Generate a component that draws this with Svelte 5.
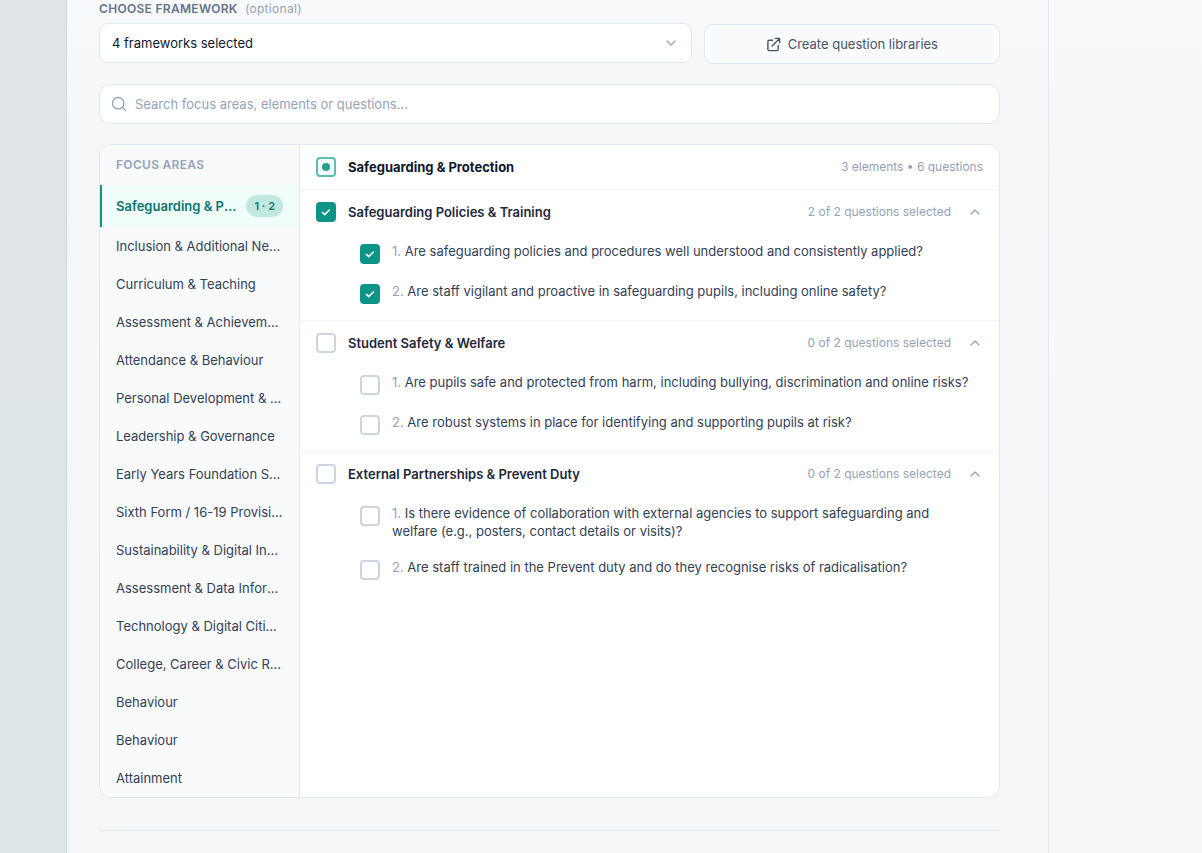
<script>
	let search = $state('');
	let activeArea = $state(0);

	const areas = [
		{ name: 'Safeguarding & Protection', badge: '1 · 2' },
		{ name: 'Inclusion & Additional Needs' },
		{ name: 'Curriculum & Teaching' },
		{ name: 'Assessment & Achievement' },
		{ name: 'Attendance & Behaviour' },
		{ name: 'Personal Development & Wellbeing' },
		{ name: 'Leadership & Governance' },
		{ name: 'Early Years Foundation Stage' },
		{ name: 'Sixth Form / 16-19 Provision' },
		{ name: 'Sustainability & Digital Innovation' },
		{ name: 'Assessment & Data Informed' },
		{ name: 'Technology & Digital Citizenship' },
		{ name: 'College, Career & Civic Readiness' },
		{ name: 'Behaviour' },
		{ name: 'Behaviour' },
		{ name: 'Attainment' }
	];

	let elements = $state([
		{
			name: 'Safeguarding Policies & Training',
			open: true,
			questions: [
				{ text: 'Are safeguarding policies and procedures well understood and consistently applied?', checked: true },
				{ text: 'Are staff vigilant and proactive in safeguarding pupils, including online safety?', checked: true }
			]
		},
		{
			name: 'Student Safety & Welfare',
			open: true,
			questions: [
				{ text: 'Are pupils safe and protected from harm, including bullying, discrimination and online risks?', checked: false },
				{ text: 'Are robust systems in place for identifying and supporting pupils at risk?', checked: false }
			]
		},
		{
			name: 'External Partnerships & Prevent Duty',
			open: true,
			questions: [
				{ text: 'Is there evidence of collaboration with external agencies to support safeguarding and welfare (e.g., posters, contact details or visits)?', checked: false },
				{ text: 'Are staff trained in the Prevent duty and do they recognise risks of radicalisation?', checked: false }
			]
		}
	]);

	const countSelected = (list) => list.filter((q) => q.checked).length;
	const allSelected = (list) => list.every((q) => q.checked);

	const allQuestions = $derived(elements.flatMap((el) => el.questions));
	const areaChecked = $derived(allSelected(allQuestions));
	const areaPartial = $derived(!areaChecked && countSelected(allQuestions) > 0);

	const setAll = (list, value) => {
		list.forEach((q) => (q.checked = value));
	};
</script>

{#snippet tick()}
	<svg class="tick" viewBox="0 0 20 20" aria-hidden="true">
		<path d="M6.4 10.4l2.3 2.2 4.7-4.6" />
	</svg>
{/snippet}

<div class="page">
	<div class="rail"></div>

	<main class="content">
		<div class="toolbar">
			<div class="field">
				<label for="framework">Choose framework <span class="optional">(optional)</span></label>
				<div class="select-box">
					<select id="framework">
						<option>4 frameworks selected</option>
					</select>
					<svg class="chevron" viewBox="0 0 16 16" aria-hidden="true"><path d="M4 6l4 4 4-4" /></svg>
				</div>
			</div>
			<button type="button" class="create">
				<svg viewBox="0 0 16 16" aria-hidden="true">
					<path d="M7 3.5H3.5a1.5 1.5 0 0 0-1.5 1.5v8a1.5 1.5 0 0 0 1.5 1.5h8a1.5 1.5 0 0 0 1.5-1.5V9" />
					<path d="M10 1.5h4.5V6M14.5 1.5L6.5 9.5" />
				</svg>
				Create question libraries
			</button>
		</div>

		<div class="search">
			<svg viewBox="0 0 16 16" aria-hidden="true">
				<circle cx="7.2" cy="7.2" r="5.7" />
				<path d="M11.4 11.4l3.1 3.1" />
			</svg>
			<input
				type="text"
				aria-label="Search focus areas"
				placeholder="Search focus areas, elements or questions..."
				bind:value={search}
			/>
		</div>

		<div class="picker">
			<nav class="areas">
				<h2>Focus areas</h2>
				{#each areas as area, i}
					<button type="button" class="area" class:active={i === activeArea} onclick={() => (activeArea = i)}>
						<span class="area-name">{area.name}</span>
						{#if area.badge}
							<span class="badge">{area.badge}</span>
						{/if}
					</button>
				{/each}
			</nav>

			<div class="panel">
				<div class="row panel-head">
					<label>
						<span class="check">
							<input
								type="checkbox"
								checked={areaChecked}
								indeterminate={areaPartial}
								onchange={() => setAll(allQuestions, !areaChecked)}
							/>
							{@render tick()}
						</span>
						<span class="area-title">{areas[0].name}</span>
					</label>
					<span class="meta">{elements.length} elements • {allQuestions.length} questions</span>
				</div>

				{#each elements as el}
					<section>
						<div class="row">
							<label>
								<span class="check">
									<input
										type="checkbox"
										checked={allSelected(el.questions)}
										onchange={(e) => setAll(el.questions, e.currentTarget.checked)}
									/>
									{@render tick()}
								</span>
								<span class="element-title">{el.name}</span>
							</label>
							<span class="meta">{countSelected(el.questions)} of {el.questions.length} questions selected</span>
							<button type="button" class="toggle" aria-label="Toggle questions" onclick={() => (el.open = !el.open)}>
								<svg class="chevron" class:closed={!el.open} viewBox="0 0 16 16" aria-hidden="true">
									<path d="M4 10l4-4 4 4" />
								</svg>
							</button>
						</div>
						{#if el.open}
							<ul>
								{#each el.questions as question, n}
									<li>
										<label>
											<span class="check">
												<input type="checkbox" bind:checked={question.checked} />
												{@render tick()}
											</span>
											<span><span class="number">{n + 1}.</span> {question.text}</span>
										</label>
									</li>
								{/each}
							</ul>
						{/if}
					</section>
				{/each}
			</div>
		</div>

		<hr />
	</main>

	<div class="gutter"></div>
</div>

<style>
	:global(body) {
		background: #f5f7f7;
	}

	.page {
		display: flex;
		min-height: 100vh;
		font-family: Inter, 'Liberation Sans', sans-serif;
		font-size: 13px;
		line-height: 18px;
		color: #334155;
		background: linear-gradient(#f7f9fb, #f5f7f7 150px, #f6f8f9 350px, #f5f7f7 600px);
	}

	.page * {
		box-sizing: border-box;
	}

	.rail {
		flex: 0 0 67px;
		background: linear-gradient(#dfe5e9, #dde5e7);
		border-right: 1px solid #cdd6dd;
	}

	.gutter {
		flex: 0 0 154px;
		border-left: 1px solid #e2e8f0;
	}

	.content {
		flex: 1;
		min-width: 0;
		padding: 0 48px 22px 32px;
	}

	button,
	select,
	input {
		font: inherit;
		color: inherit;
	}

	button {
		cursor: pointer;
	}

	svg {
		fill: none;
		stroke: currentColor;
		stroke-linecap: round;
		stroke-linejoin: round;
	}

	/* Framework select and library button */
	.toolbar {
		display: grid;
		grid-template-columns: 2fr 1fr;
		align-items: end;
		gap: 12px;
	}

	.field {
		padding-bottom: 1px;
	}

	.field label {
		display: block;
		margin-bottom: 5px;
		font-size: 12px;
		font-weight: 600;
		letter-spacing: 0.025em;
		text-transform: uppercase;
		color: #64748b;
	}

	.optional {
		margin-left: 4px;
		font-weight: 400;
		text-transform: none;
		color: #94a3b8;
	}

	.select-box {
		display: grid;
		align-items: center;
	}

	.select-box > * {
		grid-area: 1 / 1;
	}

	select {
		appearance: none;
		width: 100%;
		height: 40px;
		padding: 0 36px 0 12px;
		border: 1px solid #e2e8f0;
		border-radius: 8px;
		background: #fff;
		color: #0f172a;
	}

	.chevron {
		width: 16px;
		height: 16px;
		stroke-width: 1.3;
		color: #94a3b8;
	}

	.select-box .chevron {
		justify-self: end;
		margin-right: 13px;
		pointer-events: none;
	}

	.closed {
		transform: rotate(180deg);
	}

	.create {
		display: flex;
		align-items: center;
		justify-content: center;
		gap: 7px;
		height: 40px;
		border: 1px solid #e2e8f0;
		border-radius: 8px;
		background: #f8fafc;
		color: #475569;
	}

	.create svg {
		width: 15px;
		height: 15px;
		stroke-width: 1.5;
	}

	/* Search */
	.search {
		display: flex;
		align-items: center;
		gap: 8px;
		height: 40px;
		margin: 20px 0;
		padding: 0 11px;
		border: 1px solid #e2e8f0;
		border-radius: 12px;
		background: #fff;
		color: #94a3b8;
	}

	.search svg {
		width: 16px;
		height: 16px;
		stroke-width: 1.3;
	}

	.search input {
		flex: 1;
		min-width: 0;
		padding: 0;
		border: 0;
		outline: 0;
		background: none;
		color: #0f172a;
	}

	.search input::placeholder {
		color: #94a3b8;
		opacity: 1;
	}

	/* Focus area list */
	.picker {
		display: flex;
		border: 1px solid #e2e8f0;
		border-radius: 12px;
		background: #fff;
		overflow: hidden;
	}

	.areas {
		flex: 0 0 200px;
		min-width: 0;
		border-right: 1px solid #e2e8f0;
		background: #f8fafc;
	}

	h2 {
		margin: 0;
		padding: 11px 16px;
		font-size: 12px;
		font-weight: 600;
		letter-spacing: 0.025em;
		text-transform: uppercase;
		color: #94a3b8;
	}

	.area {
		display: flex;
		align-items: center;
		gap: 8px;
		width: 100%;
		padding: 10px 16px 10px 14px;
		border: 0;
		border-left: 2px solid transparent;
		background: none;
		text-align: left;
	}

	.area-name {
		flex: 1;
		min-width: 0;
		overflow: hidden;
		text-overflow: ellipsis;
		white-space: nowrap;
	}

	.area.active {
		border-left-color: #0d9488;
		background: #f0fdfa;
		font-weight: 600;
		color: #0f766e;
	}

	.badge {
		padding: 2px 8px;
		border-radius: 11px;
		background: #c0e8e0;
		font-size: 11px;
		font-weight: 600;
	}

	/* Elements and questions */
	.panel {
		flex: 1;
		min-width: 0;
	}

	.row {
		display: flex;
		align-items: center;
		gap: 16px;
		padding: 12px 16px;
	}

	.row label {
		display: flex;
		align-items: center;
		gap: 12px;
		flex: 1;
	}

	.panel-head,
	section:not(:last-child) {
		border-bottom: 1px solid #f1f5f9;
	}

	.area-title {
		font-weight: 700;
		color: #0f172a;
	}

	.element-title {
		font-weight: 600;
		color: #1e293b;
	}

	.meta {
		font-size: 12px;
		color: #94a3b8;
	}

	.toggle {
		display: flex;
		padding: 0;
		border: 0;
		background: none;
	}

	ul {
		display: flex;
		flex-direction: column;
		gap: 2px;
		margin: 0;
		padding: 0 24px 8px 60px;
		list-style: none;
	}

	li label {
		display: flex;
		align-items: flex-start;
		gap: 12px;
		padding: 8px 0;
	}

	li .check {
		margin-top: 2px;
	}

	.number {
		color: #94a3b8;
	}

	/* Checkbox */
	.check {
		display: grid;
		flex: 0 0 20px;
		height: 20px;
		color: #fff;
	}

	.check > * {
		grid-area: 1 / 1;
	}

	.check input {
		appearance: none;
		display: grid;
		place-items: center;
		width: 20px;
		height: 20px;
		margin: 0;
		border: 2px solid #cbd5e1;
		border-radius: 4px;
		background: #fff;
	}

	.check input:checked {
		border-color: #0d9488;
		background: #0d9488;
	}

	.check input:indeterminate {
		border-color: #5bbfb0;
		background: #f0fdfa;
	}

	.check input:indeterminate::before {
		content: '';
		width: 8px;
		height: 8px;
		border-radius: 50%;
		background: #2a9d8f;
	}

	.tick {
		display: none;
		width: 20px;
		height: 20px;
		stroke-width: 1.5;
		pointer-events: none;
	}

	input:checked:not(:indeterminate) + .tick {
		display: block;
	}

	hr {
		margin: 32px 0 0;
		border: 0;
		border-top: 1px solid #e2e8f0;
	}
</style>
